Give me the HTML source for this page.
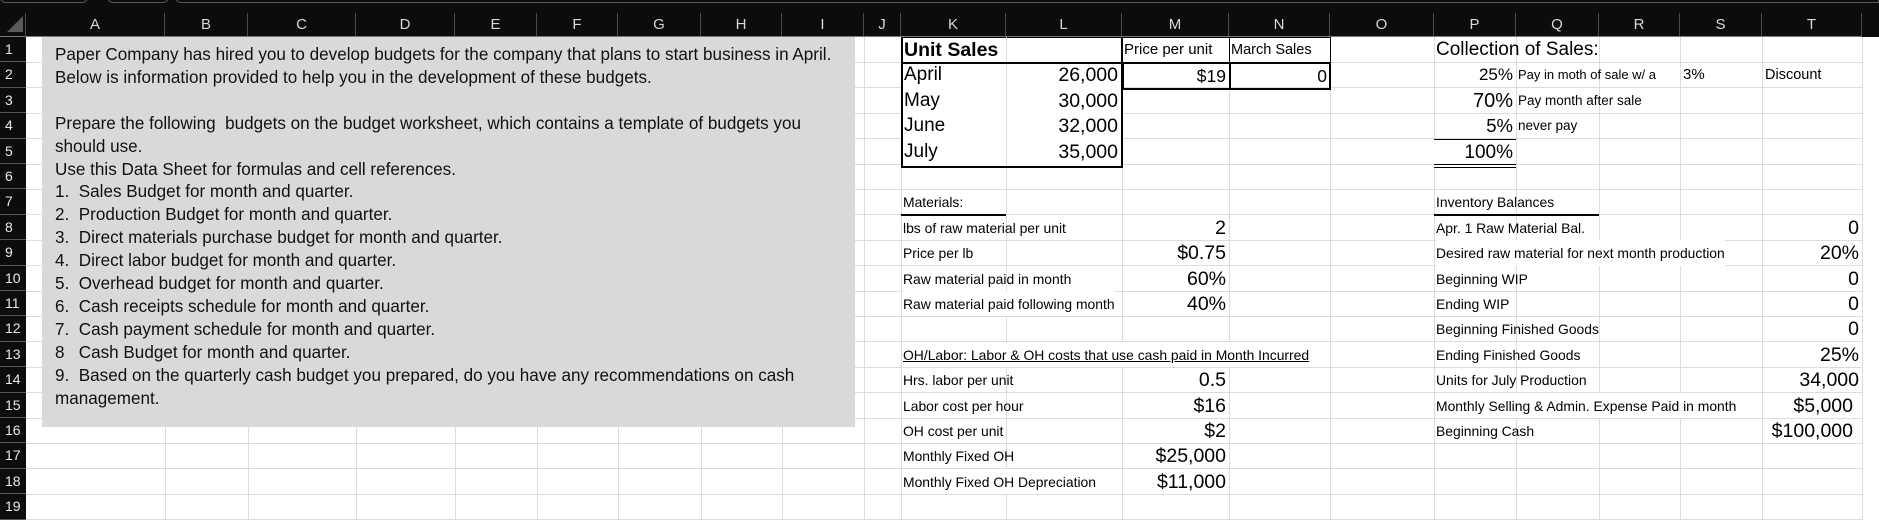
<!DOCTYPE html>
<html><head><meta charset="utf-8"><style>
*{margin:0;padding:0;box-sizing:border-box}
body{width:1879px;height:520px;overflow:hidden;background:#fff;position:relative;font-family:"Liberation Sans",Arial,sans-serif;color:#000}
.a{position:absolute}
.top{left:0;top:0;width:1879px;height:37px;background:#0c0c0c}
.hd{position:absolute;top:13px;height:24px;line-height:24px;text-align:center;color:#d8d8d8;font-size:15px;border-right:1px solid #4a4a4a}
.rn{position:absolute;left:0;width:26px;height:25.4px;background:#0c0c0c;color:#e8e8e8;font-size:14px;line-height:25px;padding-left:5px;border-bottom:1px solid #555}
.vl{position:absolute;top:37px;width:1px;height:483px;background:#dcdcdc}
.hl{position:absolute;left:26px;width:1836px;height:1px;background:#dcdcdc}
.c{position:absolute;height:25.4px;line-height:26px;white-space:nowrap;font-size:13.9px}
.r{text-align:right;padding-right:3px}
.v{font-size:19.5px}
.box{left:42px;top:37px;width:813px;height:390px;background:#d9d9d9}
.bt{position:absolute;left:55px;top:44px;font-size:17.1px;line-height:22.9px;color:#111;white-space:nowrap}
.tab{position:absolute;top:-6px;height:9px;border:1px solid #555;border-radius:0 0 6px 6px}
</style></head><body>
<div class="a top"></div>
<div class="tab" style="left:0;width:88px"></div>
<div class="tab" style="left:107px;width:62px"></div>
<div class="tab" style="left:175px;width:1704px;border-radius:0 0 0 6px"></div>
<div class="a" style="left:0;top:13px;width:26px;height:24px;border-right:1px solid #4a4a4a"></div>
<div class="a" style="left:7px;top:16px;width:0;height:0;border-left:16px solid transparent;border-bottom:16px solid #5a5a5a"></div>
<div class="hd" style="left:26px;width:139px">A</div>
<div class="hd" style="left:165px;width:83px">B</div>
<div class="hd" style="left:248px;width:108px">C</div>
<div class="hd" style="left:356px;width:99px">D</div>
<div class="hd" style="left:455px;width:82px">E</div>
<div class="hd" style="left:537px;width:81px">F</div>
<div class="hd" style="left:618px;width:83px">G</div>
<div class="hd" style="left:701px;width:81px">H</div>
<div class="hd" style="left:782px;width:82px">I</div>
<div class="hd" style="left:864px;width:37px">J</div>
<div class="hd" style="left:901px;width:105px">K</div>
<div class="hd" style="left:1006px;width:116px">L</div>
<div class="hd" style="left:1122px;width:107px">M</div>
<div class="hd" style="left:1229px;width:101px">N</div>
<div class="hd" style="left:1330px;width:104px">O</div>
<div class="hd" style="left:1434px;width:82px">P</div>
<div class="hd" style="left:1516px;width:83px">Q</div>
<div class="hd" style="left:1599px;width:81px">R</div>
<div class="hd" style="left:1680px;width:82px">S</div>
<div class="hd" style="left:1762px;width:100px">T</div>
<div class="a" style="left:0;top:36px;width:1862px;height:1px;background:#777"></div>

<div class="rn" style="top:37px">1</div><div class="rn" style="top:62.4px">2</div><div class="rn" style="top:87.8px">3</div><div class="rn" style="top:113.2px">4</div><div class="rn" style="top:138.6px">5</div><div class="rn" style="top:164px">6</div><div class="rn" style="top:189.4px">7</div><div class="rn" style="top:214.8px">8</div><div class="rn" style="top:240.2px">9</div><div class="rn" style="top:265.6px">10</div><div class="rn" style="top:291px">11</div><div class="rn" style="top:316.4px">12</div><div class="rn" style="top:341.8px">13</div><div class="rn" style="top:367.2px">14</div><div class="rn" style="top:392.6px">15</div><div class="rn" style="top:418px">16</div><div class="rn" style="top:443.4px">17</div><div class="rn" style="top:468.8px">18</div><div class="rn" style="top:494.2px">19</div>

<div class="vl" style="left:165px"></div><div class="vl" style="left:248px"></div><div class="vl" style="left:356px"></div><div class="vl" style="left:455px"></div><div class="vl" style="left:537px"></div><div class="vl" style="left:618px"></div><div class="vl" style="left:701px"></div><div class="vl" style="left:782px"></div><div class="vl" style="left:864px"></div><div class="vl" style="left:901px"></div><div class="vl" style="left:1006px"></div><div class="vl" style="left:1122px"></div><div class="vl" style="left:1229px"></div><div class="vl" style="left:1330px"></div><div class="vl" style="left:1434px"></div><div class="vl" style="left:1516px"></div><div class="vl" style="left:1599px"></div><div class="vl" style="left:1680px"></div><div class="vl" style="left:1762px"></div><div class="vl" style="left:1862px"></div>
<div class="hl" style="top:62px"></div><div class="hl" style="top:87px"></div><div class="hl" style="top:113px"></div><div class="hl" style="top:138px"></div><div class="hl" style="top:164px"></div><div class="hl" style="top:189px"></div><div class="hl" style="top:214px"></div><div class="hl" style="top:240px"></div><div class="hl" style="top:265px"></div><div class="hl" style="top:291px"></div><div class="hl" style="top:316px"></div><div class="hl" style="top:341px"></div><div class="hl" style="top:367px"></div><div class="hl" style="top:392px"></div><div class="hl" style="top:418px"></div><div class="hl" style="top:443px"></div><div class="hl" style="top:468px"></div><div class="hl" style="top:494px"></div><div class="hl" style="top:519px"></div>

<div class="a box"></div>
<div class="bt">Paper Company has hired you to develop budgets for the company that plans to start business in April.<br>Below is information provided to help you in the development of these budgets.<br><br>Prepare the following&nbsp; budgets on the budget worksheet, which contains a template of budgets you<br>should use.<br>Use this Data Sheet for formulas and cell references.<br>1.&nbsp; Sales Budget for month and quarter.<br>2.&nbsp; Production Budget for month and quarter.<br>3.&nbsp; Direct materials purchase budget for month and quarter.<br>4.&nbsp; Direct labor budget for month and quarter.<br>5.&nbsp; Overhead budget for month and quarter.<br>6.&nbsp; Cash receipts schedule for month and quarter.<br>7.&nbsp; Cash payment schedule for month and quarter.<br>8&nbsp;&nbsp; Cash Budget for month and quarter.<br>9.&nbsp; Based on the quarterly cash budget you prepared, do you have any recommendations on cash<br>management.</div>

<!-- Unit sales table -->
<div class="a" style="left:901px;top:37px;width:222px;height:131px;border:2px solid #000;border-top:1px solid #000;background:#fff"></div>
<div class="a" style="left:903px;top:62px;width:219px;height:2px;background:#000"></div>
<div class="a" style="left:1006px;top:64px;width:1px;height:102px;background:#dcdcdc"></div>
<div class="a" style="left:1006px;top:37px;width:1px;height:25px;background:#dcdcdc"></div>
<div class="c" style="left:904px;top:37px;font-size:19.5px;font-weight:bold">Unit Sales</div>
<div class="c v" style="left:904px;top:62.4px;font-size:19px">April</div>
<div class="c v" style="left:904px;top:87.8px;font-size:19px">May</div>
<div class="c v" style="left:904px;top:113.2px;font-size:19px">June</div>
<div class="c v" style="left:904px;top:138.6px;font-size:19px">July</div>
<div class="c v r" style="left:1006px;top:62.4px;width:115px">26,000</div>
<div class="c v r" style="left:1006px;top:87.8px;width:115px">30,000</div>
<div class="c v r" style="left:1006px;top:113.2px;width:115px">32,000</div>
<div class="c v r" style="left:1006px;top:138.6px;width:115px">35,000</div>

<div class="a" style="left:1122px;top:37px;width:209px;height:26px;border:1px solid #000"></div>
<div class="a" style="left:1229px;top:37px;width:1px;height:26px;background:#000"></div>
<div class="a" style="left:1122px;top:62px;width:209px;height:28px;border:2px solid #000"></div>
<div class="a" style="left:1229px;top:62px;width:2px;height:27px;background:#000"></div>
<div class="c" style="left:1124px;top:37px;font-size:15px">Price per unit</div>
<div class="c" style="left:1231px;top:37px;font-size:14.5px">March Sales</div>
<div class="c r" style="left:1122px;top:63px;width:107px;font-size:17.5px">$19</div>
<div class="c r" style="left:1229px;top:63px;width:101px;font-size:17.5px">0</div>

<!-- Collection -->
<div class="c" style="left:1436px;top:37px;font-size:19px">Collection of Sales:</div>
<div class="c r" style="left:1434px;top:62.4px;width:82px;font-size:17px">25%</div>
<div class="c" style="left:1518px;top:62.4px;font-size:13px">Pay in moth of sale w/ a</div>
<div class="c" style="left:1683px;top:62.4px;font-size:15px">3%</div>
<div class="c" style="left:1765px;top:62.4px;font-size:14.5px">Discount</div>
<div class="c r" style="left:1434px;top:87.8px;width:82px;font-size:20px">70%</div>
<div class="c" style="left:1518px;top:87.8px;font-size:13.5px">Pay month after sale</div>
<div class="c r" style="left:1434px;top:113.2px;width:82px;font-size:18.5px">5%</div>
<div class="c" style="left:1518px;top:113.2px;font-size:13.5px">never pay</div>
<div class="a" style="left:1434px;top:139px;width:82px;height:2px;background:#000"></div>
<div class="c r" style="left:1434px;top:140px;width:82px;font-size:19px;background:#fff;height:24px">100%</div>
<div class="a" style="left:1434px;top:164px;width:82px;height:4px;border-top:1px solid #000;border-bottom:1px solid #000;background:#fff"></div>

<!-- Materials -->
<div class="c" style="left:903px;top:189.4px">Materials:</div>
<div class="a" style="left:901px;top:214px;width:105px;height:2px;background:#000"></div>
<div class="c" style="left:903px;top:214.8px">lbs of raw material per unit</div>
<div class="c" style="left:903px;top:240.2px">Price per lb</div>
<div class="c" style="left:903px;top:265.6px">Raw material paid in month</div>
<div class="c" style="left:903px;top:291px;background:#fff">Raw material paid following month</div>
<div class="c v r" style="left:1122px;top:214.8px;width:107px">2</div>
<div class="c v r" style="left:1122px;top:240.2px;width:107px">$0.75</div>
<div class="c v r" style="left:1122px;top:265.6px;width:107px">60%</div>
<div class="c v r" style="left:1122px;top:291px;width:107px">40%</div>

<div class="c" style="left:903px;top:341.8px;text-decoration:underline;background:#fff;width:427px">OH/Labor: Labor &amp; OH costs that use cash paid in Month Incurred</div>
<div class="c" style="left:903px;top:367.2px">Hrs. labor per unit</div>
<div class="c" style="left:903px;top:392.6px">Labor cost per hour</div>
<div class="c" style="left:903px;top:418px">OH cost per unit</div>
<div class="c" style="left:903px;top:443.4px">Monthly Fixed OH</div>
<div class="c" style="left:903px;top:468.8px;background:#fff">Monthly Fixed OH Depreciation</div>
<div class="c v r" style="left:1122px;top:367.2px;width:107px">0.5</div>
<div class="c v r" style="left:1122px;top:392.6px;width:107px">$16</div>
<div class="c v r" style="left:1122px;top:418px;width:107px">$2</div>
<div class="c v r" style="left:1122px;top:443.4px;width:107px">$25,000</div>
<div class="c v r" style="left:1122px;top:468.8px;width:107px">$11,000</div>

<!-- Inventory -->
<div class="c" style="left:1436px;top:189.4px">Inventory Balances</div>
<div class="a" style="left:1434px;top:214px;width:165px;height:2px;background:#000"></div>
<div class="c" style="left:1436px;top:214.8px">Apr. 1 Raw Material Bal.</div>
<div class="c" style="left:1436px;top:240.2px;background:#fff">Desired raw material for next month production</div>
<div class="c" style="left:1436px;top:265.6px">Beginning WIP</div>
<div class="c" style="left:1436px;top:291px">Ending WIP</div>
<div class="c" style="left:1436px;top:316.4px">Beginning Finished Goods</div>
<div class="c" style="left:1436px;top:341.8px">Ending Finished Goods</div>
<div class="c" style="left:1436px;top:367.2px">Units for July Production</div>
<div class="c" style="left:1436px;top:392.6px;background:#fff">Monthly Selling &amp; Admin. Expense Paid in month</div>
<div class="c" style="left:1436px;top:418px">Beginning Cash</div>
<div class="c v r" style="left:1762px;top:214.8px;width:100px">0</div>
<div class="c v r" style="left:1762px;top:240.2px;width:100px">20%</div>
<div class="c v r" style="left:1762px;top:265.6px;width:100px">0</div>
<div class="c v r" style="left:1762px;top:291px;width:100px">0</div>
<div class="c v r" style="left:1762px;top:316.4px;width:100px">0</div>
<div class="c v r" style="left:1762px;top:341.8px;width:100px">25%</div>
<div class="c v r" style="left:1762px;top:367.2px;width:100px">34,000</div>
<div class="c v r" style="left:1762px;top:392.6px;width:100px;padding-right:9px">$5,000</div>
<div class="c v r" style="left:1762px;top:418px;width:100px;padding-right:9px">$100,000</div>
</body></html>
